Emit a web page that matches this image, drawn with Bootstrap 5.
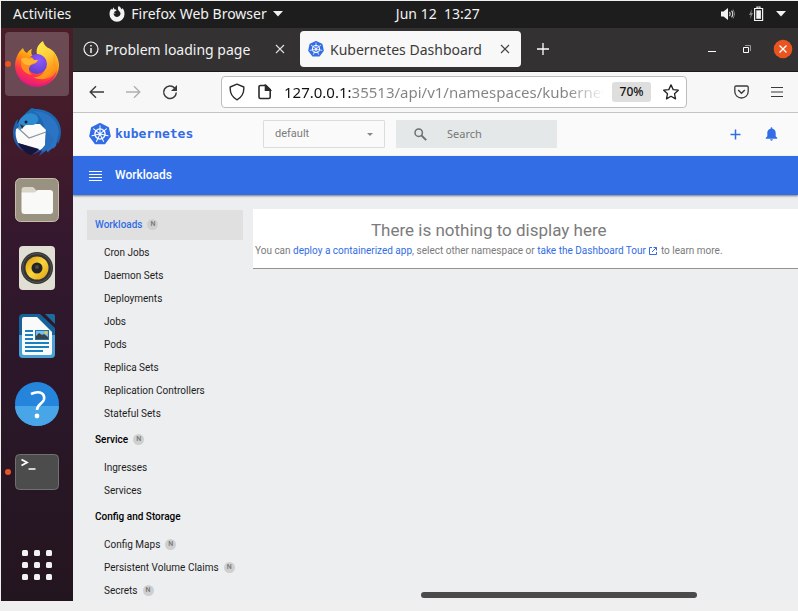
<!DOCTYPE html>
<html lang="en">
<head>
<meta charset="utf-8">
<meta name="viewport" content="width=device-width, initial-scale=1">
<title>Kubernetes Dashboard</title>
<link href="https://cdn.jsdelivr.net/npm/bootstrap@5.3.0/dist/css/bootstrap.min.css" rel="stylesheet">
<style>
:root { --k8s: #326de6; }
body { background: #efefef; font-family: "Noto Sans", "Open Sans", sans-serif; font-size: 14px; line-height: 20px; color: #3b3b3b; }
svg { display: block; flex: none; }
button.plain { background: none; border: 0; padding: 0; color: inherit; font: inherit; display: flex; align-items: center; flex: none; }
.screen { padding: 1px 0 10px 1px; }
.topbar { height: 27px; background: #1d1d1d; color: #f2f2f2; padding: 0 12px; }
.topbar .side-start { flex: 5 1 0; gap: 38px; }
.topbar .side-end { flex: 4 1 0; }
.topbar .app-menu { gap: 6px; }
.topbar .tray { gap: 12px; }
.dock { width: 72px; flex: none; padding: 4px; gap: 4px; background: linear-gradient(#481e28 0, #411a2b 22%, #33182e 38%, #2b1729 62%, #23151f 100%); }
.dock .plain { width: 64px; height: 64px; justify-content: center; border-radius: 4px; position: relative; }
.dock .current { background: rgba(255,255,255,.2); }
.dock .running::before { content: ""; position: absolute; left: 0; top: 29px; width: 6px; height: 6px; border-radius: 50%; background: #e95420; }
.tabs { height: 44px; background: #333132; border-bottom: 1px solid #1c1b1b; color: #f2f2f2; padding: 0 5px 0 10px; }
.tab-item { width: 217px; height: 36px; padding-right: 15px; gap: 6px; }
.tab-item span { padding-top: 2px; }
.tab-item.open { width: 221px; padding: 0 11px 0 8px; background: #f8f8f8; color: #3b3b3b; border-radius: 4px; }
.window-buttons { gap: 21px; }
.tools { height: 41px; background: #f7f7f7; border-bottom: 1px solid #c4c4c4; padding: 0 15px 0 15px; }
.tools-end { gap: 22px; }
.address { height: 32px; width: 466px; margin-left: 43px; border: 1px solid #bdbdbd; border-radius: 4px; background: #fff; padding: 0 7px; }
.address input { min-width: 0; border: 0; outline: 0; padding: 0; margin: 0 9px 0 9px; font-size: 15px; color: transparent; background: linear-gradient(90deg, #111 67px, #828282 67px, #828282 calc(100% - 36px), rgba(130,130,130,.05)) text; -webkit-background-clip: text; background-clip: text; }
.address .bookmark { padding-left: 12px; }
button.zoom-level { background: #dedede; border-radius: 3px; width: 39px; height: 20px; justify-content: center; font-size: 12px; font-weight: 500; color: #111; }
.appbar { height: 43px; background: #fafafa; padding: 0 20px 0 16px; color: var(--k8s); }
.wordmark { font: bold 13px/20px "DejaVu Sans Mono", monospace; color: var(--k8s); width: 148px; }
.namespace { width: 122px; height: 28px; border: 1px solid #dcdcdc; border-radius: 1px; font: 11px/16px Roboto, sans-serif; color: #7b7b7b; padding: 0 11px; background: #fafafa url("data:image/svg+xml,%3Csvg xmlns='http://www.w3.org/2000/svg' width='6' height='3'%3E%3Cpath d='M0 0h6L3 3z' fill='%23888'/%3E%3C/svg%3E") no-repeat right 11px center; appearance: none; }
.search { width: 161px; height: 28px; margin-left: 11px; padding: 0 18px; background: #e4e8e9; border-radius: 1px; color: #6f6f6f; }
.search input { border: 0; outline: 0; padding: 0; background: none; min-width: 0; font-size: 11px; margin-left: 20px; }
.search input::placeholder { color: #777; }
.bluebar { height: 39px; background: var(--k8s); color: #fff; padding: 0 16px; gap: 13px; font: 500 12px/20px Roboto, sans-serif; box-shadow: 0 1px 2px rgba(0,0,0,.5); position: relative; }
.dash { background: #edeef0; font-family: Roboto, sans-serif; font-size: 10px; line-height: 15px; padding: 14px 0 0 14px; gap: 10px; }
.side-nav { width: 156px; flex: none; padding-top: 1px; }
.side-nav a { color: #1d1d1d; text-decoration: none; display: flex; align-items: center; gap: 5px; height: 23px; padding-left: 17px; }
.side-nav a.head { height: 30px; padding-left: 8px; font-weight: 500; color: #000; margin-bottom: 1px; }
.side-nav a.head.active { background: #e0e0e0; color: var(--k8s); }
.ns { width: 11px; height: 11px; border-radius: 50%; background: #cfcfcf; color: #757575; font-size: 7px; line-height: 11px; text-align: center; font-weight: 500; }
.empty { background: #fff; padding: 10px 0 10px 2px; color: #7b7b7b; border-bottom: 1px solid #929292; }
.empty h1 { font-size: 17px; line-height: 22px; font-weight: 400; margin: 0 0 2px; }
.empty p { margin: 0; line-height: 15px; }
.empty a { color: var(--k8s); text-decoration: none; }
.empty svg { display: inline-block; vertical-align: -2px; }
.hscroll { left: 48%; width: 38%; bottom: 3px; height: 6px; border-radius: 3px; background: #4a4a4a; }
</style>
</head>
<body>
<svg width="0" height="0" class="position-absolute" aria-hidden="true">
  <defs>
    <g id="spoke"><path d="M16 14V4" stroke="#fff" stroke-width="1.400" stroke-linecap="round"/></g>
    <symbol id="k8s" viewBox="0 0 32 32">
      <path d="M16 1.500 27.500 7 30.200 19.200 22.300 29.500H9.700L1.800 19.200 4.500 7z" fill="#326de6" stroke="#326de6" stroke-width="3" stroke-linejoin="round"/>
      <circle cx="16" cy="16" r="7.400" fill="none" stroke="#fff" stroke-width="2"/>
      <use href="#spoke"/><use href="#spoke" transform="rotate(51.430 16 16)"/><use href="#spoke" transform="rotate(102.860 16 16)"/><use href="#spoke" transform="rotate(154.290 16 16)"/><use href="#spoke" transform="rotate(205.710 16 16)"/><use href="#spoke" transform="rotate(257.140 16 16)"/><use href="#spoke" transform="rotate(308.570 16 16)"/>
      <circle cx="16" cy="16" r="2.200" fill="#fff"/>
    </symbol>
    <linearGradient id="fxBody" x1=".8" y1="0" x2=".3" y2="1"><stop offset="0" stop-color="#fff44f"/><stop offset=".4" stop-color="#ff980e"/><stop offset=".7" stop-color="#ff3647"/><stop offset="1" stop-color="#e31587"/></linearGradient>
    <linearGradient id="fxTail" x1="0" y1="0" x2=".4" y2="1"><stop offset="0" stop-color="#fff44f"/><stop offset=".5" stop-color="#ffd03a"/><stop offset="1" stop-color="#ff8a16"/></linearGradient>
    <radialGradient id="fxGlobe" cx=".6" cy=".3" r=".8"><stop offset="0" stop-color="#9059ff"/><stop offset="1" stop-color="#5b3cc4"/></radialGradient>
    <linearGradient id="tb" x1="0" y1="0" x2="0" y2="1"><stop offset="0" stop-color="#1a6fb5"/><stop offset="1" stop-color="#2552a8"/></linearGradient>
    <linearGradient id="amber" x1="0" y1="0" x2="1" y2="1"><stop offset="0" stop-color="#d89b10"/><stop offset=".5" stop-color="#fbd43c"/><stop offset="1" stop-color="#dca014"/></linearGradient>
  </defs>
</svg>

<div class="screen vh-100 d-flex flex-column overflow-hidden">
  <header class="topbar d-flex align-items-center">
    <div class="side-start d-flex align-items-center">
      <button class="plain">Activities</button>
      <button class="plain app-menu">
        <svg width="16" height="16" viewBox="0 0 16 16" fill="#f2f2f2"><path d="M9.800 0c2 1.200 2.300 2.600 2.600 3.300.6-.1.800-.7.800-1.200C15 3.800 15.600 6 15.500 8.200A7.500 7.500 0 0 1 .5 8.200C.5 5.500 1.500 3.800 2.400 2.600l.6 1.300L4.700 1.200l.6 2.100c1 0 1.700.2 2.300.7-.6 1.300-2 1.300-2.300 2-.5.8.2 1.100 1.500.9-.9 1-2 .7-2.300.6.1 2 1.700 3.400 3.600 3.400 2.100 0 3.600-1.700 3.400-3.600C11.300 5.400 9.900 5.300 9.300 4 8.700 2.600 8.800 1 9.800 0z"/></svg>
        <span>Firefox Web Browser</span>
        <svg width="10" height="6" viewBox="0 0 10 6"><path d="M0 0h10L5 5.500z" fill="#f2f2f2"/></svg>
      </button>
    </div>
    <button class="plain">Jun 12&nbsp; 13:27</button>
    <div class="side-end d-flex justify-content-end">
      <button class="plain tray" aria-label="System menu">
        <svg width="16" height="16" viewBox="0 0 16 16"><path d="M1 5.500h2.500L8 2v12l-4.500-3.500H1z" fill="#f2f2f2"/><path d="M9.500 5.800q1.500 2.200 0 4.400M11.600 4.700q2.300 3.300 0 6.600" fill="none" stroke="#d5d5d5" stroke-width="1.200"/><path d="M13.200 3.600q3 4.400 0 8.800" fill="none" stroke="#777"/></svg>
        <svg width="16" height="16" viewBox="0 0 16 16"><path d="M4 3 1 9h1.800L2 13l3-6H3.300z" fill="#888"/><path d="M6.600 2.500h8v12h-8zM9 1h3v1.500H9z" fill="none" stroke="#f2f2f2" stroke-width="1.200"/><path d="M8.300 4.300h4.600v8.500H8.300z" fill="#f2f2f2"/></svg>
        <svg width="10" height="6" viewBox="0 0 10 6"><path d="M0 0h10L5 5.500z" fill="#f2f2f2"/></svg>
      </button>
    </div>
  </header>

  <div class="d-flex flex-grow-1 overflow-hidden">
    <nav class="dock d-flex flex-column" aria-label="Dock">
      <button class="plain current running" aria-label="Firefox">
        <svg width="46" height="48" viewBox="0 0 46 48">
          <path d="M9 8c1 3 2 4 4 5 2-3 4-4 5-4-1 2-1 4 0 6l8 4 8-11c7 3 11 11 11 17a22 21 0 0 1-44 1C1 19 4 12 9 8z" fill="url(#fxBody)"/>
          <path d="M29 1c-6 4-7 9-6 13 8 2 11 8 8 16-2 5-7 8-12 7 12 6 24-1 25-13C44 16 40 11 36 9c-4-2-6-4-7-8z" fill="url(#fxTail)"/>
          <path d="M40 13c4 11-1 23-14 26 10-7 14-14 14-26z" fill="#ff9e1c" opacity=".7"/>
          <circle cx="23" cy="24" r="10" fill="url(#fxGlobe)"/>
          <path d="M7 21c0-3 3-4 6-3 3-2 6-1 7 2h4c-1 4-6 4-8 6-2 3-1 6 2 9-7-1-12-6-11-14z" fill="#ff8a22"/>
          <path d="M7 19c3-2 6-1 8 0 2-1 4 0 5 1h4c-2 4-6 3-8 5-4 1-8-2-9-6z" fill="#ffb62e"/>
          <path d="M2 31c4 12 17 17 30 11 5-3 9-7 11-12-2 11-12 17-20 17C12 47 4 40 2 31z" fill="#e31587" opacity=".6"/>
        </svg>
      </button>
      <button class="plain" aria-label="Thunderbird">
        <svg width="48" height="48" viewBox="0 0 48 48">
          <path d="M11 7C15 3 17 1 19 0l3 1c15 0 26 10 26 23 0 4-1 8-3 12l-1-3-3 8-2-3-4 7-1-3-8 6 3-6-8 4C7 44 0 36 0 25c0-6 2-11 5-14l-1 5z" fill="url(#tb)"/>
          <path d="M20 3c14 0 25 9 26 21l-3 14-9 6-2-20C31 13 28 8 20 3z" fill="#2b74c4"/>
          <path d="m3 21 10-5h14l6 6-1 17-5 3L5 35c-2-4-3-9-2-14z" fill="#fafafa"/>
          <path d="M5 20 16 30 33 24" fill="none" stroke="#8d939b" stroke-width="1.200"/>
          <path d="M33 21c3 3 4 7 8 9l-3 8-4 4-4 2-2-2 4-5z" fill="#276ebd"/>
          <path d="M8 10C13 4 21 4 24 8c3 4 0 8-4 9l-7 0-6 5C5 18 5 13 8 10z" fill="#2f8bd0"/>
          <path d="M5 35 26 41l-3 3-5 3C12 45 8 41 5 35z" fill="#15143d"/>
          <circle cx="13" cy="14" r="1.500" fill="#0c1c38"/><path d="m7 16 2 5 2-3z" fill="#333"/>
        </svg>
      </button>
      <button class="plain" aria-label="Files">
        <svg width="44" height="44" viewBox="0 0 44 44"><rect x=".5" y=".5" width="43" height="43" rx="5" fill="#9a9280" stroke="#c4bda9"/><path d="M6.500 12a3 3 0 0 1 3-3H18l4 4h13v5h-28z" fill="#d9d5c9"/><path d="M6.500 14.500H20l2.500-2.500H35a3 3 0 0 1 3 3v18a3 3 0 0 1-3 3H9.500a3 3 0 0 1-3-3z" fill="#f9f9f7"/></svg>
      </button>
      <button class="plain" aria-label="Rhythmbox">
        <svg width="44" height="44" viewBox="0 0 44 44"><rect x="4" y="0" width="36" height="44" rx="4" fill="#e1ded3"/><circle cx="22" cy="22" r="16" fill="#343434"/><circle cx="22" cy="22" r="14.500" fill="none" stroke="#555" stroke-width="1"/><circle cx="22" cy="22" r="11.500" fill="url(#amber)"/><circle cx="22" cy="22" r="5.500" fill="#242424"/><circle cx="22" cy="21" r="2" fill="#4a4a4a"/></svg>
      </button>
      <button class="plain" aria-label="LibreOffice Writer">
        <svg width="44" height="44" viewBox="0 0 44 44"><path d="M8 0h17l15 14v26a4 4 0 0 1-4 4H8a4 4 0 0 1-4-4V4a4 4 0 0 1 4-4z" fill="#15639a"/><path d="M4 21h36v19a4 4 0 0 1-4 4H8a4 4 0 0 1-4-4z" fill="#4aa1d5"/><path d="M7 5a2 2 0 0 1 2-2h13l15 15v21a2 2 0 0 1-2 2H9a2 2 0 0 1-2-2z" fill="#fafafa"/><path d="M30 0h8a2 2 0 0 1 2 2v8z" fill="#1b6c9f"/><path d="M10 17h8M10 21h8M10 25h8M10 29h24M10 33h24M10 37h18" stroke="#1b80bf" stroke-width="2"/><path d="M20 16h14v10H20z" fill="#1b75ad"/><path d="M21 17h12v8H21z" fill="#78bfe8"/><path d="m21 25v-3l3-3 3 2 2-1 4 3v2z" fill="#3b4248"/><circle cx="31" cy="18.500" r="1.500" fill="#f5c52c"/></svg>
      </button>
      <button class="plain" aria-label="Help">
        <svg width="44" height="44" viewBox="0 0 44 44"><circle cx="22" cy="22" r="22" fill="#2585dc"/><path d="M0 24h44a22 20 0 0 1-44 0z" fill="#48a5e7"/><path d="M16 12q5-2.500 9-1.500 5 1.500 4 7c-1 4-7 5-7 10.500" fill="none" stroke="#fff" stroke-width="2.600"/><circle cx="22" cy="34" r="2.400" fill="#fff"/></svg>
      </button>
      <button class="plain running" aria-label="Terminal">
        <svg width="44" height="36" viewBox="0 0 44 36"><rect x=".5" y=".5" width="43" height="35" rx="4" fill="#4c4c4c" stroke="#707070"/><path d="m6.500 5.500 5.500 3-5.500 3" fill="none" stroke="#fff" stroke-width="1.800"/><path d="M13.500 15h7" stroke="#fff" stroke-width="1.500"/></svg>
      </button>
      <button class="plain mt-auto" aria-label="Show applications">
        <svg width="30" height="30" viewBox="0 0 30 30" fill="#f2f2f2"><rect width="6" height="6" rx="1.500"/><rect x="12" width="6" height="6" rx="1.500"/><rect x="24" width="6" height="6" rx="1.500"/><rect y="12" width="6" height="6" rx="1.500"/><rect x="12" y="12" width="6" height="6" rx="1.500"/><rect x="24" y="12" width="6" height="6" rx="1.500"/><rect y="24" width="6" height="6" rx="1.500"/><rect x="12" y="24" width="6" height="6" rx="1.500"/><rect x="24" y="24" width="6" height="6" rx="1.500"/></svg>
      </button>
    </nav>

    <div class="flex-grow-1 d-flex flex-column position-relative overflow-hidden">
      <div class="tabs d-flex align-items-center">
        <div class="tab-item d-flex align-items-center">
          <svg width="16" height="16" viewBox="0 0 16 16" fill="none" stroke="#f2f2f2" stroke-width="1.200"><circle cx="8" cy="8" r="7"/><path d="M8 7v5M8 4v1.600" stroke-width="1.500"/></svg>
          <span class="text-nowrap">Problem loading page</span>
          <button class="plain ms-auto" aria-label="Close tab"><svg width="10" height="10" viewBox="0 0 10 10"><path d="m1 1 8 8M9 1 1 9" stroke="#e0e0e0" stroke-width="1.100"/></svg></button>
        </div>
        <div class="tab-item open d-flex align-items-center">
          <svg width="16" height="16"><use href="#k8s"/></svg>
          <span class="text-nowrap">Kubernetes Dashboard</span>
          <button class="plain ms-auto" aria-label="Close tab"><svg width="10" height="10" viewBox="0 0 10 10"><path d="m1 1 8 8M9 1 1 9" stroke="#444" stroke-width="1.100"/></svg></button>
        </div>
        <button class="plain ms-3" aria-label="New tab"><svg width="12" height="12" viewBox="0 0 12 12"><path d="M6 0v12M0 6h12" stroke="#fff" stroke-width="1.300"/></svg></button>
        <div class="window-buttons d-flex align-items-center ms-auto">
          <button class="plain me-1" aria-label="Minimize"><svg width="10" height="10" viewBox="0 0 10 10"><path d="M1 7.500h8" stroke="#fff"/></svg></button>
          <button class="plain" aria-label="Restore"><svg width="10" height="10" viewBox="0 0 10 10" fill="none"><path d="M1.500 3.500h5v5h-5z" stroke="#fff"/><path d="M3 1.500h5.500V7" stroke="#999"/></svg></button>
          <button class="plain" aria-label="Close window"><svg width="20" height="20" viewBox="0 0 20 20"><circle cx="10" cy="10" r="9.300" fill="#e95420"/><path d="m6.500 6.500 7 7M13.500 6.500l-7 7" stroke="#fff" stroke-width="1.300"/></svg></button>
        </div>
      </div>

      <div class="tools d-flex align-items-center">
        <div class="d-flex gap-3">
          <button class="plain me-1" aria-label="Back"><svg width="17" height="16" viewBox="0 0 17 16" fill="none" stroke="#3b3b3b" stroke-width="1.400"><path d="M16 8H2.500M8 2.200 2.200 8 8 13.800"/></svg></button>
          <button class="plain me-1" aria-label="Forward"><svg width="17" height="16" viewBox="0 0 17 16" fill="none" stroke="#b0b0b0" stroke-width="1.400"><path d="M1 8h13.500M9 2.200 14.800 8 9 13.800"/></svg></button>
          <button class="plain" aria-label="Reload"><svg width="16" height="16" viewBox="0 0 16 16"><path d="M12.700 4A6.300 6.300 0 1 0 14.300 8.500" fill="none" stroke="#3b3b3b" stroke-width="1.500"/><path d="M15 1v6H9z" fill="#3b3b3b"/></svg></button>
        </div>
        <div class="address d-flex align-items-center flex-shrink-1">
          <svg width="16" height="18" viewBox="0 0 16 18" fill="none" stroke="#2b2b2b" stroke-width="1.400"><path d="M8 1.200 14.800 4q.6 9-6.800 12.800Q.6 13 1.200 4z" stroke-linejoin="round"/></svg>
          <svg class="ms-2" width="22" height="16" viewBox="-5 0 22 16" fill="none" stroke="#2b2b2b" stroke-width="1.600"><path d="M2.500 1.500h5.500l4.200 4.200v7.300a1.500 1.500 0 0 1-1.500 1.500H2.500A1.500 1.500 0 0 1 1 13V3a1.500 1.500 0 0 1 1.500-1.500z"/><path d="M7.500 1.500v4.700h4.700z" fill="#2b2b2b"/></svg>
          <input class="flex-grow-1" type="text" aria-label="Address" value="127.0.0.1:35513/api/v1/namespaces/kubernetes-dashboard">
          <button class="plain zoom-level">70%</button>
          <button class="plain bookmark" aria-label="Bookmark"><svg width="16" height="16" viewBox="0 0 16 16" fill="none" stroke="#222" stroke-width="1.300" stroke-linejoin="round"><path d="m8 .9 2.200 4.700 5.100.6-3.800 3.500 1 5.200L8 12.300l-4.500 2.600 1-5.200L.7 6.200l5.100-.6z"/></svg></button>
        </div>
        <div class="tools-end d-flex align-items-center ms-auto">
          <button class="plain" aria-label="Pocket"><svg width="15" height="14" viewBox="0 0 15 14" fill="none" stroke="#3b3b3b" stroke-width="1.300"><path d="M2 1h11a1.200 1.200 0 0 1 1.200 1.200V6.500a6.700 6.500 0 0 1-13.400 0V2.200A1.200 1.200 0 0 1 2 1z"/><path d="m4.200 5 3.300 3.200L10.800 5" stroke-width="1.500"/></svg></button>
          <button class="plain" aria-label="Application menu"><svg width="12" height="12" viewBox="0 0 12 12"><path d="M0 1.500h12M0 6h12M0 10.500h12" stroke="#3b3b3b" stroke-width="1.200"/></svg></button>
        </div>
      </div>

      <div class="appbar d-flex align-items-center">
        <svg width="22" height="22" class="me-1"><use href="#k8s"/></svg>
        <span class="wordmark">kubernetes</span>
        <select class="namespace" aria-label="Namespace"><option>default</option></select>
        <label class="search d-flex align-items-center">
          <svg width="13" height="13" viewBox="0 0 13 13" fill="none" stroke="#6f6f6f"><circle cx="4.700" cy="4.700" r="3.700" stroke-width="1.500"/><path d="m7.500 7.500 4.700 4.700" stroke-width="1.900"/></svg>
          <input type="search" placeholder="Search" aria-label="Search">
        </label>
        <div class="d-flex align-items-center ms-auto gap-4">
          <button class="plain" aria-label="Create"><svg width="11" height="11" viewBox="0 0 11 11"><path d="M5.500.5v10M.5 5.500h10" stroke="#326de6" stroke-width="1.500"/></svg></button>
          <button class="plain" aria-label="Notifications"><svg width="13" height="14" viewBox="0 0 13 14" fill="#326de6"><path d="M5.600 1.200a.9.900 0 0 1 1.800 0v.5c2.200.5 3.300 2.200 3.300 4.300v3.300l1.500 1.500v.9H.8v-.9l1.500-1.500V6c0-2.100 1.100-3.800 3.300-4.300zM5.100 12.300h2.800q0 1.400-1.400 1.400t-1.400-1.400z"/></svg></button>
        </div>
      </div>

      <div class="bluebar d-flex align-items-center">
        <button class="plain" aria-label="Toggle navigation"><svg width="13" height="11" viewBox="0 0 13 11"><path d="M0 1.500h13M0 4.500h13M0 7.500h13M0 10.500h13" stroke="#fff" stroke-width="1"/></svg></button>
        <span>Workloads</span>
      </div>

      <div class="dash d-flex flex-grow-1 overflow-hidden">
        <nav class="side-nav" aria-label="Resources">
          <a class="head active" href="#">Workloads <span class="ns">N</span></a>
          <a href="#">Cron Jobs</a><a href="#">Daemon Sets</a><a href="#">Deployments</a><a href="#">Jobs</a><a href="#">Pods</a><a href="#">Replica Sets</a><a href="#">Replication Controllers</a><a href="#">Stateful Sets</a>
          <a class="head" href="#">Service <span class="ns">N</span></a>
          <a href="#">Ingresses</a><a href="#">Services</a>
          <a class="head" href="#">Config and Storage</a>
          <a href="#">Config Maps <span class="ns">N</span></a><a href="#">Persistent Volume Claims <span class="ns">N</span></a><a href="#">Secrets <span class="ns">N</span></a>
        </nav>
        <main class="flex-grow-1">
          <section class="empty">
            <div class="d-inline-block text-center">
              <h1>There is nothing to display here</h1>
              <p>You can <a href="#">deploy a containerized app</a>, select other namespace or <a href="#">take the Dashboard Tour <svg width="10" height="10" viewBox="0 0 10 10" fill="none" stroke="#326de6"><path d="M4 1.500H1.500v7h7V6M5.500 1.500h3v3M8.500 1.500 4 6"/></svg></a> to learn more.</p>
            </div>
          </section>
        </main>
      </div>
      <div class="hscroll position-absolute"></div>
    </div>
  </div>
</div>
<script src="https://cdn.jsdelivr.net/npm/bootstrap@5.3.0/dist/js/bootstrap.bundle.min.js"></script>
</body>
</html>
